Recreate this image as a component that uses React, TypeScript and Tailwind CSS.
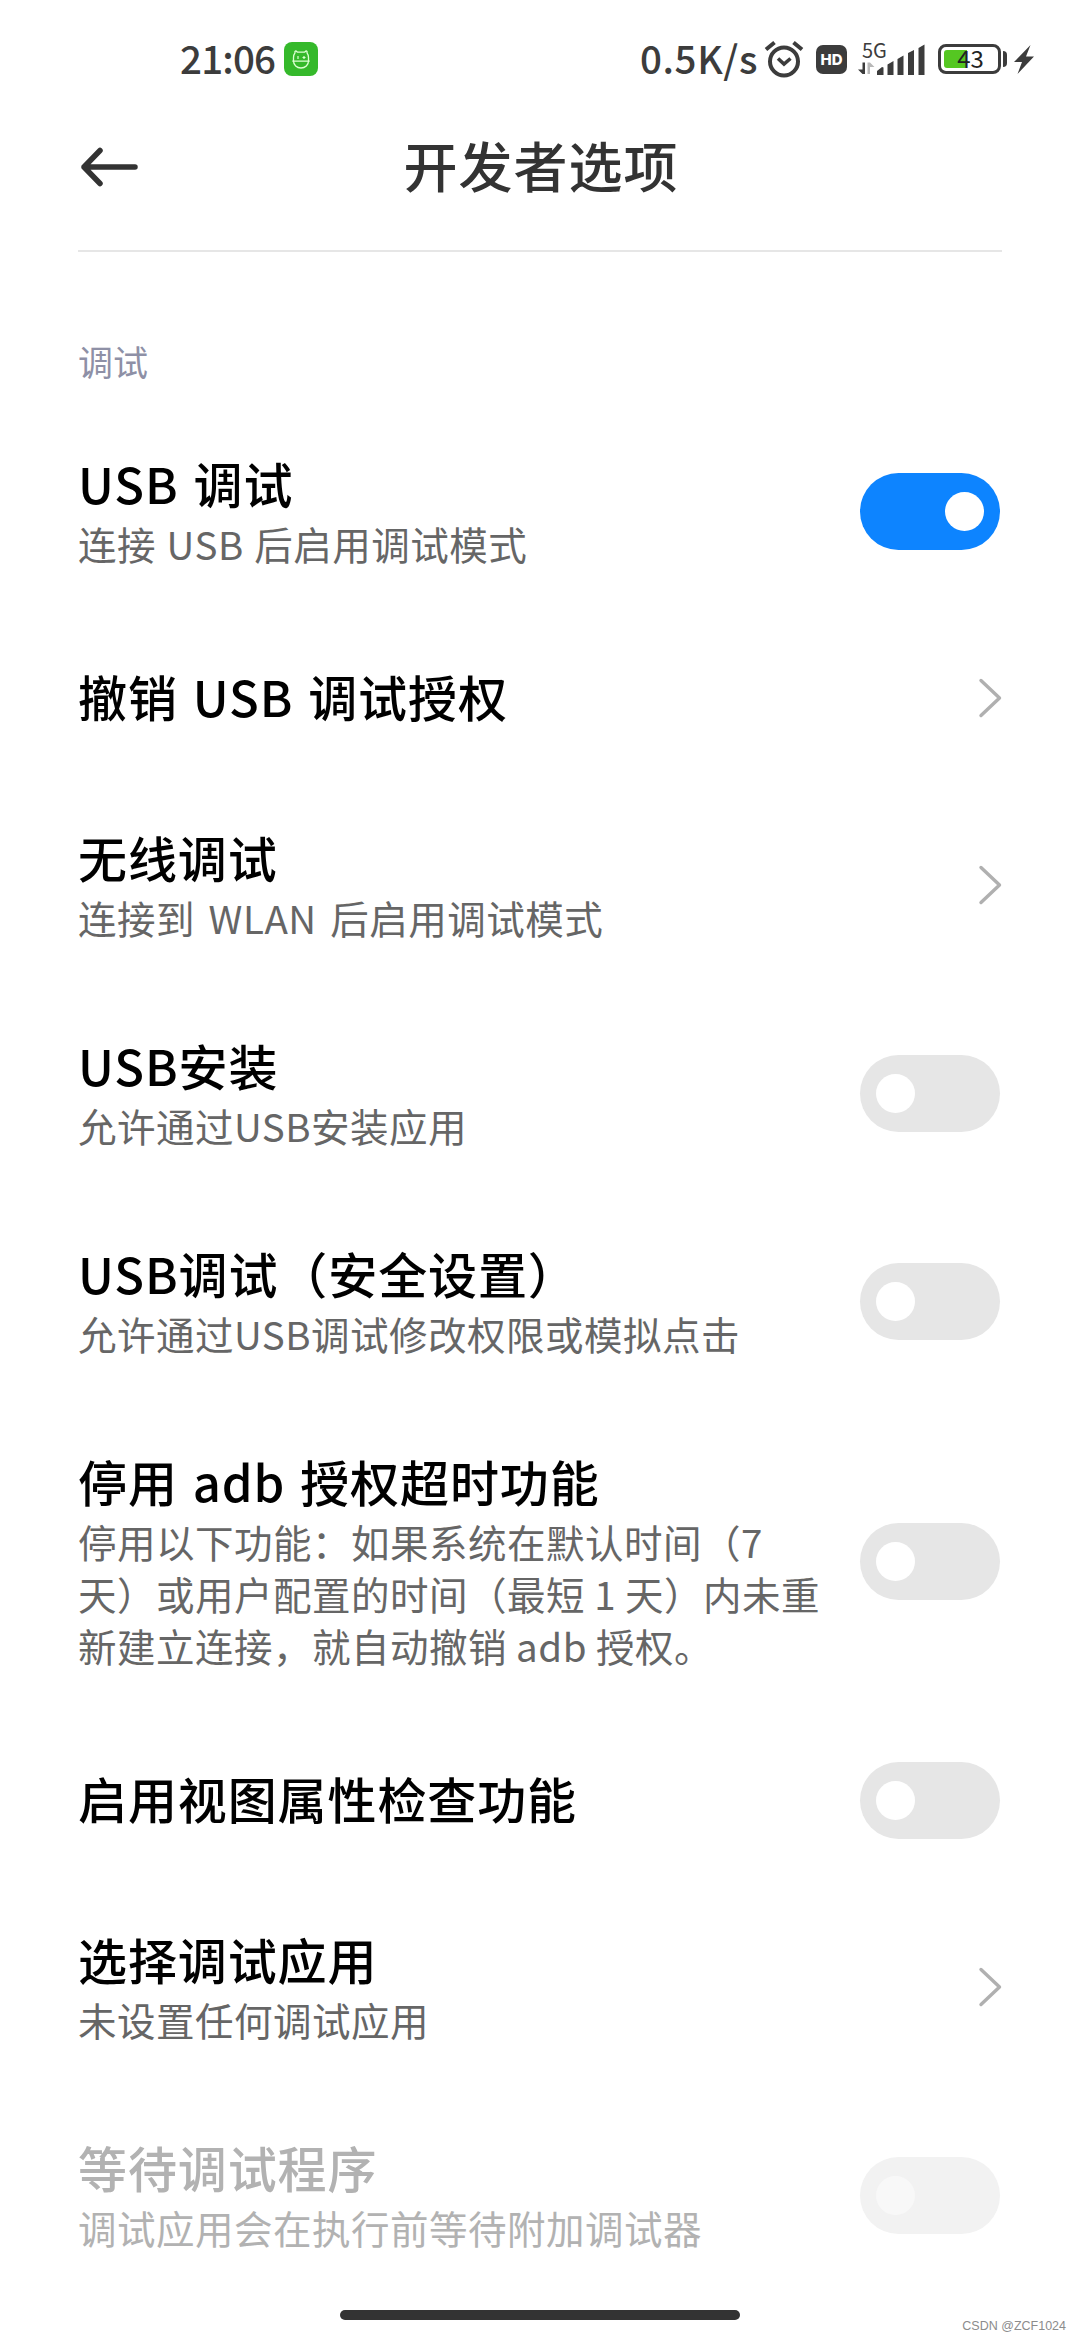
import type { ReactNode } from "react";

type RowProps = {
  title: string;
  lines?: string[];
  control: "on" | "off" | "chevron";
  disabled?: boolean;
  spacing?: string;
};

const rows: RowProps[] = [
  { title: "USB 调试", lines: ["连接 USB 后启用调试模式"], control: "on" },
  { title: "撤销 USB 调试授权", control: "chevron" },
  { title: "无线调试", lines: ["连接到 WLAN 后启用调试模式"], control: "chevron", spacing: "[word-spacing:4.5px]" },
  { title: "USB安装", lines: ["允许通过USB安装应用"], control: "off" },
  { title: "USB调试（安全设置）", lines: ["允许通过USB调试修改权限或模拟点击"], control: "off" },
  {
    title: "停用 adb 授权超时功能",
    lines: [
      "停用以下功能：如果系统在默认时间（7",
      "天）或用户配置的时间（最短 1 天）内未重",
      "新建立连接，就自动撤销 adb 授权。",
    ],
    control: "off",
    spacing: "[word-spacing:0px]",
  },
  { title: "启用视图属性检查功能", control: "off" },
  { title: "选择调试应用", lines: ["未设置任何调试应用"], control: "chevron" },
  { title: "等待调试程序", lines: ["调试应用会在执行前等待附加调试器"], control: "off", disabled: true },
];

function Toggle({ on, disabled }: { on: boolean; disabled?: boolean }) {
  const track = on ? "justify-end bg-[#0d84ff]" : disabled ? "bg-[#f2f2f2]" : "bg-[#e6e6e6]";
  return (
    <div className={`mr-0.5 flex h-[77px] w-[140px] shrink-0 items-center rounded-full px-4 ${track}`}>
      <div className={`size-[39px] rounded-full ${disabled ? "bg-[#f8f8f8]" : "bg-white"}`} />
    </div>
  );
}

function Chevron() {
  return (
    <svg className="h-10 w-6 shrink-0" viewBox="0 0 24 40" fill="none" stroke="#b0b0b0" strokeWidth="3.4" strokeLinecap="round" strokeLinejoin="round">
      <path d="M3 2.5 21.5 20 3 37.5" />
    </svg>
  );
}

function Row({ title, lines, control, disabled, spacing = "[word-spacing:1.5px]" }: RowProps) {
  return (
    <li className="flex min-h-[166px] items-center justify-between py-11">
      <div className="whitespace-pre">
        <div className={`h-[68px] text-[49px] leading-[64px] font-medium tracking-[0.9px] [word-spacing:3px] ${disabled ? "text-[#b2b2b2]" : "text-black"}`}>
          {title}
        </div>
        {lines?.map((line) => (
          <div key={line} className={`h-[52px] text-[38.5px] leading-[48px] tracking-[0.5px] ${spacing} ${disabled ? "text-[#b2b2b2]" : "text-[#666]"}`}>
            {line}
          </div>
        ))}
      </div>
      {control === "chevron" ? <Chevron /> : <Toggle on={control === "on"} disabled={disabled} />}
    </li>
  );
}

function StatusText({ children }: { children: ReactNode }) {
  return <span className="block pb-1 text-[38.5px] leading-[56px] font-medium whitespace-nowrap">{children}</span>;
}

function StatusBar() {
  return (
    <div className="flex h-[118px] items-center text-[#3c3c3c]">
      <div className="ml-[180px] w-[104px] tracking-[-0.8px]">
        <StatusText>21:06</StatusText>
      </div>
      <svg className="size-[34px] shrink-0" viewBox="0 0 34 34" fill="none" stroke="#dcffd2" strokeWidth="1.3">
        <rect width="34" height="34" rx="8" fill="#35b92b" stroke="none" />
        <path d="M9.5 19v-3.500c0-2 .5-3.500 1.500-4.700-.6-1.700.8-2.400 2-1 .3.300.6.400 1 .4h6c.4 0 .7-.1 1-.4 1.200-1.400 2.600-.7 2 1 1 1.200 1.500 2.700 1.500 4.700V19c0 4-3.300 7-7.500 7s-7.500-3-7.500-7zM8.300 19.200h17.400" />
        <path d="M14 14v3M20 14v3M18.500 15.500h3" strokeWidth="1.200" />
      </svg>
      <div className="ml-[322px] w-[124px] tracking-[0.6px]">
        <StatusText>0.5K/s</StatusText>
      </div>
      <svg className="h-[38px] w-10 shrink-0" viewBox="0 0 40 38" fill="none" stroke="currentColor" strokeWidth="4">
        <circle cx="20" cy="21.500" r="14" />
        <path d="m14 18.500 6 5.500 6.500-5.500" strokeWidth="3.600" />
        <path d="m2 9.500 8.500-7M38 9.500l-8.500-7" />
      </svg>
      <div className="ml-3 flex h-[29px] w-[31px] shrink-0 items-center justify-center rounded-[7px] bg-[#3c3c3c] pt-px font-['Inter'] text-[15px] leading-none font-extrabold text-white">
        HD
      </div>
      <div className="relative ml-[11px] h-9 w-[68px] shrink-0">
        <svg className="h-9 w-[68px]" viewBox="0 0 68 36" fill="currentColor">
          <path d="M4.500 21.500H7v11.500H4.500L0 28.500h4.500z" />
          <path d="M9.500 21.500h2.500l4.500 4.500h-4.500V33H9.500z" fill="#b8b8b8" />
          <path d="M19 30l5-4 1.500.5V34h-6.500zM29.500 23.500l6-3.500V34h-6zM39.500 18l6-3.500V34h-6zM50 12l6-3v25h-6zM60.500 7l6-3.500V34h-6z" />
        </svg>
        <span className="absolute top-[-3px] left-[4px] text-[20px] leading-6">5G</span>
      </div>
      <div className="relative ml-3 h-[30px] w-[63px] shrink-0 rounded-[8px] border-[3.500px] border-[#3c3c3c] p-[3px]">
        <div className="h-full w-[23px] rounded-l-[3px] bg-[#55c722]" />
        <span className="absolute inset-0 flex items-center justify-center pb-0.5 pl-0.5 text-[24px] leading-none text-[#222]">43</span>
      </div>
      <div className="ml-0.5 h-4 w-1 shrink-0 rounded-r-sm bg-[#3c3c3c]" />
      <svg className="ml-[7px] h-[29px] w-5 shrink-0" viewBox="0 0 20 29" fill="currentColor">
        <path d="M16.500 0 0 17h8L3.500 29 20 11.500h-8z" />
      </svg>
    </div>
  );
}

export default function App() {
  return (
    <div className="relative flex h-[2340px] w-[1080px] flex-col overflow-hidden bg-white font-['Noto_Sans_CJK_SC',sans-serif]">
      <StatusBar />
      <header className="mx-[78px] grid h-[134px] grid-cols-[60px_1fr_60px] items-center border-b-2 border-[#e6e6e6] pb-[35px] text-[#333]">
        <svg className="h-11 w-[60px]" viewBox="0 0 60 44" fill="none" stroke="currentColor" strokeWidth="5.500" strokeLinecap="round" strokeLinejoin="round">
          <path d="M57 22H6M22 5.500 6 22l16 16.500" />
        </svg>
        <h1 className="pb-[4px] pl-[2px] text-center text-[54px] leading-[80px] font-medium tracking-[1px]">开发者选项</h1>
      </header>
      <main className="mx-[78px]">
        <h2 className="mt-[83px] h-[53px] text-[35px] leading-[52px] text-[#8e90a6]">调试</h2>
        <ul className="mt-[19px]">
          {rows.map((row) => (
            <Row key={row.title} {...row} />
          ))}
        </ul>
      </main>
      <div className="absolute bottom-5 left-[340px] h-2.5 w-[400px] rounded-full bg-[#333]" />
      <div className="absolute right-[14px] bottom-[5px] font-['Liberation_Sans'] text-[12.500px] leading-[18px] text-[#8c8c8c]">CSDN @ZCF1024</div>
    </div>
  );
}
